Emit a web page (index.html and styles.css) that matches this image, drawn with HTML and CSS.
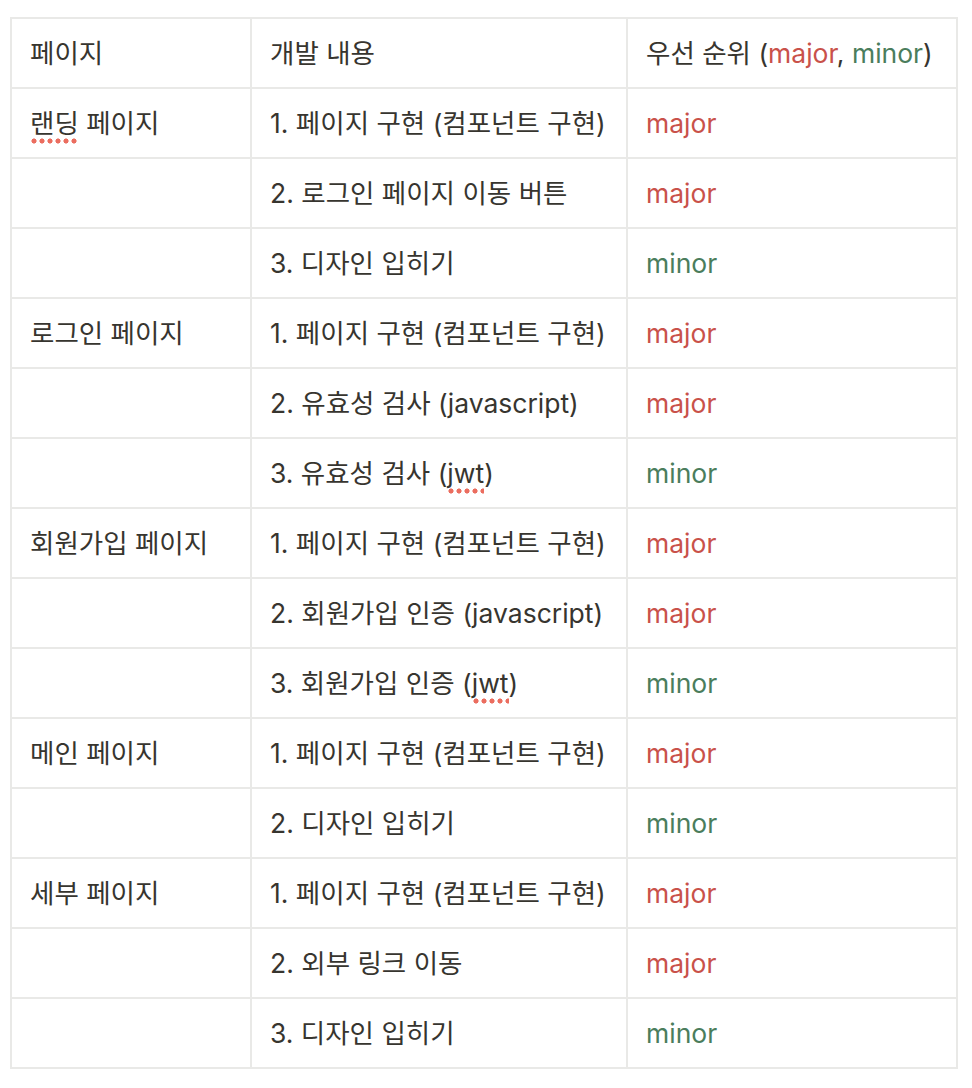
FILE: index.html
```html
<!DOCTYPE html>
<html lang="ko">
<head>
<meta charset="utf-8">
<link rel="stylesheet" href="styles.css">
</head>
<body>
<table class="plan">
  <colgroup>
    <col class="c1"><col class="c2"><col class="c3">
  </colgroup>
  <tbody>
    <tr><td>페이지</td><td>개발 내용</td><td>우선 순위 (<span class="major">major</span>, <span class="minor">minor</span>)</td></tr>
    <tr><td><span class="spell">랜딩</span> 페이지</td><td>1. 페이지 구현 (컴포넌트 구현)</td><td class="major">major</td></tr>
    <tr><td></td><td>2. 로그인 페이지 이동 버튼</td><td class="major">major</td></tr>
    <tr><td></td><td>3. 디자인 입히기</td><td class="minor">minor</td></tr>
    <tr><td>로그인 페이지</td><td>1. 페이지 구현 (컴포넌트 구현)</td><td class="major">major</td></tr>
    <tr><td></td><td>2. 유효성 검사 (javascript)</td><td class="major">major</td></tr>
    <tr><td></td><td>3. 유효성 검사 (<span class="spell">jwt</span>)</td><td class="minor">minor</td></tr>
    <tr><td>회원가입 페이지</td><td>1. 페이지 구현 (컴포넌트 구현)</td><td class="major">major</td></tr>
    <tr><td></td><td>2. 회원가입 인증 (javascript)</td><td class="major">major</td></tr>
    <tr><td></td><td>3. 회원가입 인증 (<span class="spell">jwt</span>)</td><td class="minor">minor</td></tr>
    <tr><td>메인 페이지</td><td>1. 페이지 구현 (컴포넌트 구현)</td><td class="major">major</td></tr>
    <tr><td></td><td>2. 디자인 입히기</td><td class="minor">minor</td></tr>
    <tr><td>세부 페이지</td><td>1. 페이지 구현 (컴포넌트 구현)</td><td class="major">major</td></tr>
    <tr><td></td><td>2. 외부 링크 이동</td><td class="major">major</td></tr>
    <tr><td></td><td>3. 디자인 입히기</td><td class="minor">minor</td></tr>
  </tbody>
</table>
</body>
</html>
```
FILE: styles.css
```css
html, body {
  margin: 0;
  padding: 0;
  background: #ffffff;
}
body {
  padding: 17px 10px 0 10px;
  font-family: "Inter", "Noto Sans CJK KR", sans-serif;
  color: #37352f;
}
.plan {
  border-collapse: collapse;
  table-layout: fixed;
  width: 948px;
  font-size: 26.5px;
}
.c1 { width: 240px; }
.c2 { width: 376px; }
.c3 { width: 330px; }
.plan td {
  border: 2px solid #e9e9e7;
  height: 70px;
  padding: 0 18px;
  vertical-align: middle;
  white-space: nowrap;
  line-height: 1.3;
  box-sizing: border-box;
}
.major { color: #c9514a; }
.minor { color: #4a7d5c; }
.spell {
  padding-bottom: 5px;
  background-image: radial-gradient(circle, #eb6d5f 2.3px, transparent 2.8px);
  background-size: 8px 6px;
  background-repeat: repeat-x;
  background-position: 0 100%;
}
```
